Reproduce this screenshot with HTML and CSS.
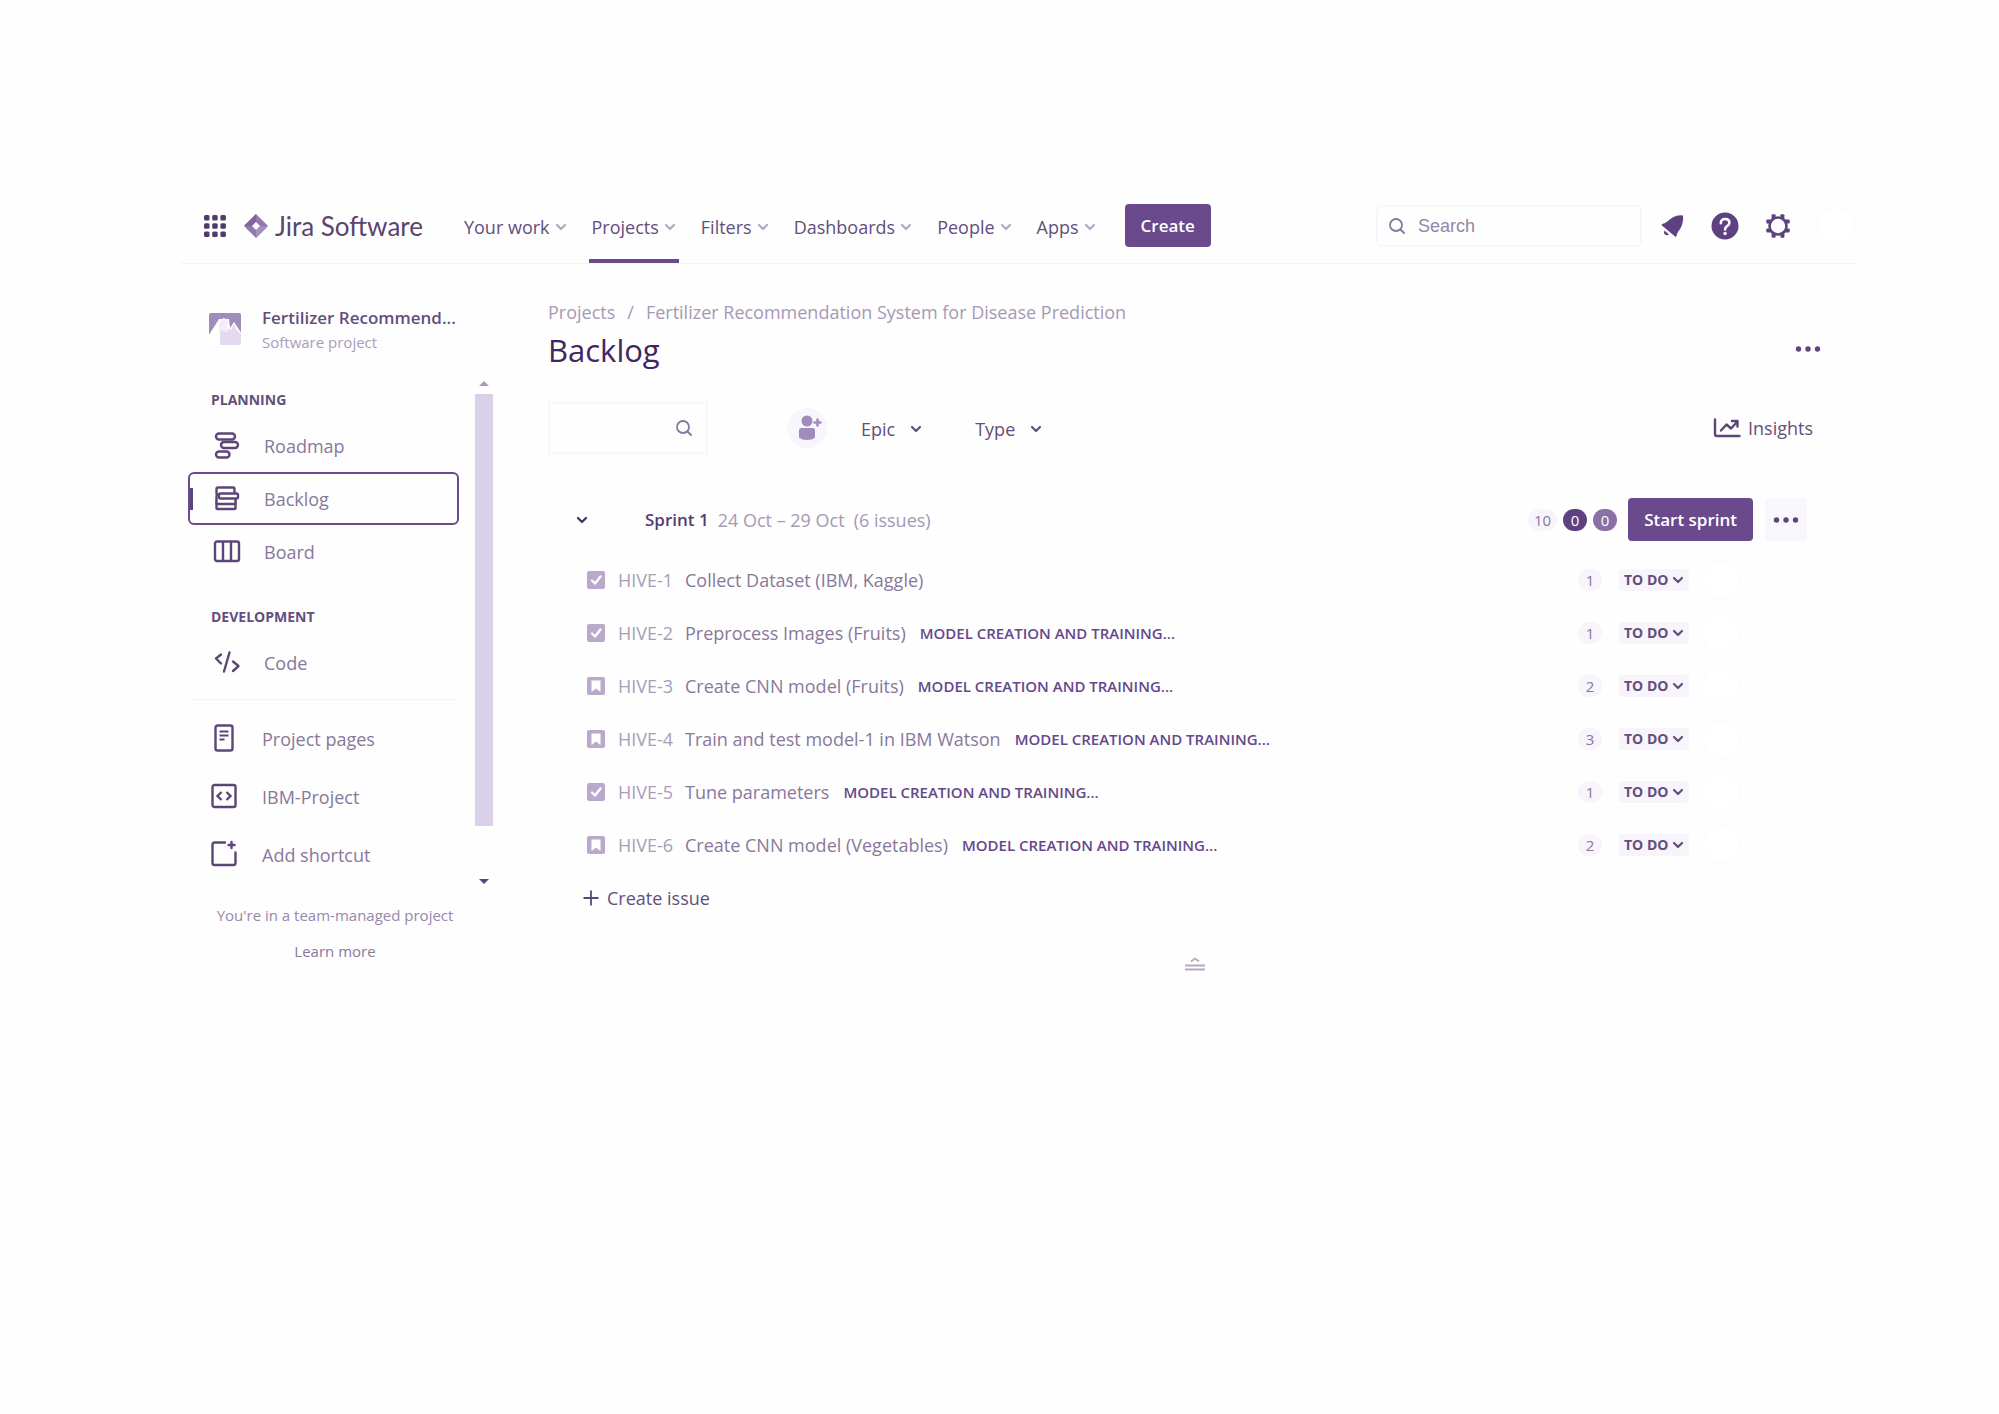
FILE: index.html
```html
<!DOCTYPE html>
<html lang="en">
<head>
<meta charset="utf-8">
<meta name="viewport" content="width=device-width, initial-scale=1">
<title>Backlog - Jira Software</title>
<link rel="stylesheet" href="styles.css">
</head>
<body>
<svg class="sprite" aria-hidden="true">
  <symbol id="chev" viewBox="0 0 12 12"><path d="M2 4l4 4 4-4" fill="none" stroke="currentColor" stroke-width="2.2" stroke-linecap="round" stroke-linejoin="round"/></symbol>
  <symbol id="lens" viewBox="0 0 18 18"><circle cx="8" cy="8" r="6" fill="none" stroke="currentColor" stroke-width="1.8"/><path d="M12.500 12.500L16 16" stroke="currentColor" stroke-width="2" stroke-linecap="round"/></symbol>
  <symbol id="dots" viewBox="0 0 26 8"><circle cx="3.500" cy="4" r="2.700" fill="currentColor"/><circle cx="13" cy="4" r="2.700" fill="currentColor"/><circle cx="22.500" cy="4" r="2.700" fill="currentColor"/></symbol>
  <symbol id="task" viewBox="0 0 18 18"><rect width="18" height="18" rx="2" fill="#b9aacb"/><path d="M5 9.500l3 3 5.500-7" fill="none" stroke="#fff" stroke-width="2.400" stroke-linecap="round" stroke-linejoin="round"/></symbol>
  <symbol id="story" viewBox="0 0 18 18"><rect width="18" height="18" rx="2" fill="#b9aacb"/><path d="M4.500 3.500h9v11.500l-4.500-3.500-4.500 3.500z" fill="#fff"/></symbol>
</svg>

<div class="app">
  <header class="topbar">
    <button class="icon-btn apps" aria-label="Switch to">
      <svg width="24" height="24" viewBox="0 0 24 24" fill="#4f3a6e"><rect x="1" y="1" width="5.500" height="5.500" rx="1.500"/><rect x="9.200" y="1" width="5.500" height="5.500" rx="1.500"/><rect x="17.400" y="1" width="5.500" height="5.500" rx="1.500"/><rect x="1" y="9.200" width="5.500" height="5.500" rx="1.500"/><rect x="9.200" y="9.200" width="5.500" height="5.500" rx="1.500"/><rect x="17.400" y="9.200" width="5.500" height="5.500" rx="1.500"/><rect x="1" y="17.400" width="5.500" height="5.500" rx="1.500"/><rect x="9.200" y="17.400" width="5.500" height="5.500" rx="1.500"/><rect x="17.400" y="17.400" width="5.500" height="5.500" rx="1.500"/></svg>
    </button>
    <a class="logo" href="#">
      <svg width="24" height="24" viewBox="0 0 24 24"><path d="M12 0l11.300 11.300a1 1 0 0 1 0 1.400L12 24 .7 12.700a1 1 0 0 1 0-1.400z" fill="#9179b0"/><path d="M12 0v8L8 12H.4q0-.4.3-.7z" fill="#7d659e"/><path d="M12 24v-8l4-4h7.600q0 .4-.3.7z" fill="#a48fbe"/><path d="M12 8l4 4-4 4-4-4z" fill="#fff"/></svg>
      <span>Jira Software</span>
    </a>
    <nav class="menu" aria-label="Primary">
      <button>Your work<svg class="chev"><use href="#chev"/></svg></button>
      <button class="current">Projects<svg class="chev"><use href="#chev"/></svg></button>
      <button>Filters<svg class="chev"><use href="#chev"/></svg></button>
      <button>Dashboards<svg class="chev"><use href="#chev"/></svg></button>
      <button>People<svg class="chev"><use href="#chev"/></svg></button>
      <button>Apps<svg class="chev"><use href="#chev"/></svg></button>
    </nav>
    <button class="primary">Create</button>
    <div class="tools">
      <label class="search"><svg class="lens"><use href="#lens"/></svg><input type="search" placeholder="Search" aria-label="Search"></label>
      <button class="icon-btn" aria-label="Notifications">
        <svg width="28" height="28" viewBox="0 0 28 28" fill="#5d4180"><path d="M25 3.500q.8 5-1 9.500-1.500 4-3.800 6.500-1.200 1.500-1.700 4.500-.4 1.300-1.500.4L4 13.500q-1-1 .3-1.500 3-.8 4.700-2.300 3-2.800 6-4.500 4.500-2.500 10-1.700z"/><path d="M6.500 18.500l4.500 4q-2.500 1.500-4.200-.2-1.500-1.500-.3-3.800z"/></svg>
      </button>
      <button class="icon-btn" aria-label="Help">
        <svg width="28" height="28" viewBox="0 0 28 28"><circle cx="14" cy="14" r="13.500" fill="#5d4180"/><path d="M9.800 11.300q0-4.300 4.300-4.300t4.300 3.800q0 2.200-2.300 3.400-2 1.100-2 3.300" fill="none" stroke="#fff" stroke-width="2.600" stroke-linecap="round"/><circle cx="14.100" cy="21.500" r="1.700" fill="#fff"/></svg>
      </button>
      <button class="icon-btn" aria-label="Settings">
        <svg width="28" height="28" viewBox="0 0 28 28"><g fill="#5d4180"><rect x="7.600" y="2.300" width="4" height="5" rx="1"/><rect x="16.400" y="2.300" width="4" height="5" rx="1"/><rect x="7.600" y="20.700" width="4" height="5" rx="1"/><rect x="16.400" y="20.700" width="4" height="5" rx="1"/><rect x="2.300" y="7.600" width="5" height="4" rx="1"/><rect x="2.300" y="16.400" width="5" height="4" rx="1"/><rect x="20.700" y="7.600" width="5" height="4" rx="1"/><rect x="20.700" y="16.400" width="5" height="4" rx="1"/></g><circle cx="14" cy="14" r="8.500" fill="#fff" stroke="#5d4180" stroke-width="2.600"/></svg>
      </button>
      <button class="avatar" aria-label="Your profile"></button>
    </div>
  </header>

  <div class="body">
    <aside class="sidebar">
      <div class="project">
        <svg width="34" height="34" viewBox="0 0 34 34"><path d="M3 1h28q2 0 2 2v19l-4 1H5l-4-1V3q0-2 2-2z" fill="#a08bba"/><path d="M0 24l6-9 5-8h10l1 9 4-6 8 12v12H0z" fill="#fff"/><path d="M11 10l4-4 4 1 1 12h-9z" fill="#f3edf8"/><path d="M12 33V18l7 2 2-4 2 2 3-6 2 5 5 5v9q0 2-2 2z" fill="#e4daf0"/></svg>
        <div>
          <div class="project-name">Fertilizer Recommend...</div>
          <div class="project-type">Software project</div>
        </div>
      </div>
      <div class="scroller">
        <nav class="side-nav" aria-label="Project">
          <h2>PLANNING</h2>
          <a href="#"><svg width="30" height="30" viewBox="0 0 30 30" fill="none" stroke="#5c4678" stroke-width="2.400"><rect x="4" y="2.500" width="19" height="6" rx="3"/><rect x="9" y="11" width="17" height="6" rx="3"/><rect x="4" y="20.500" width="13.500" height="6" rx="3"/></svg>Roadmap</a>
          <a class="selected" href="#"><svg width="30" height="30" viewBox="0 0 30 30" fill="#fff" stroke="#5c4678" stroke-width="2.400"><rect x="4.500" y="17" width="19" height="8" rx="1"/><rect x="4.500" y="11" width="19" height="9" rx="1"/><rect x="4.500" y="3.500" width="18" height="7" rx="1.500"/><rect x="7" y="9.500" width="19" height="5" rx="1.500"/></svg>Backlog</a>
          <a href="#"><svg width="30" height="30" viewBox="0 0 30 30" fill="none" stroke="#5c4678" stroke-width="2.400"><rect x="3" y="4.500" width="24" height="19.500" rx="2"/><path d="M11 5v19M19 5v19"/></svg>Board</a>
          <h2 class="later">DEVELOPMENT</h2>
          <a href="#"><svg width="30" height="30" viewBox="0 0 30 30" fill="none" stroke="#5c4678" stroke-width="2.400" stroke-linecap="round" stroke-linejoin="round"><path d="M9 6.500L4 10.500l5 5M17.500 4.500l-5.500 19M21 13.500l5.500 4.500-5.500 5"/></svg>Code</a>
          <hr>
          <div class="shortcuts">
            <a href="#"><svg width="30" height="30" viewBox="0 0 30 30" fill="none" stroke="#5c4678" stroke-width="2.400"><rect x="6.500" y="1.500" width="17" height="25" rx="2"/><path d="M10.500 7.500h9M10.500 11.500h9M10.500 15.500h5" stroke-width="2"/></svg>Project pages</a>
            <a href="#"><svg width="30" height="30" viewBox="0 0 30 30" fill="none" stroke="#5c4678" stroke-width="2.400"><rect x="3.500" y="3" width="23" height="22" rx="2"/><path d="M12.500 10l-4 4 4 4M17.500 10l4 4-4 4"/></svg>IBM-Project</a>
            <a href="#"><svg width="30" height="30" viewBox="0 0 30 30" fill="none" stroke="#5c4678" stroke-width="2.400" stroke-linecap="round"><path d="M16 2.500H5.500q-2 0-2 2V23q0 2 2 2H24.500q2 0 2-2V12.500M22.500 2v6M19.500 5h6"/></svg>Add shortcut</a>
          </div>
        </nav>
        <div class="scrollbar" aria-hidden="true">
          <svg width="10" height="5" viewBox="0 0 10 5"><path d="M0 5l5-5 5 5z" fill="#a99ab9"/></svg>
          <div class="thumb"></div>
          <svg width="10" height="5" viewBox="0 0 10 5"><path d="M0 0h10L5 5z" fill="#5c4678"/></svg>
        </div>
      </div>
      <footer class="side-foot">
        <p>You're in a team-managed project</p>
        <a href="#">Learn more</a>
      </footer>
    </aside>

    <main class="main">
      <nav class="crumbs" aria-label="Breadcrumb"><a href="#">Projects</a><span>/</span><a href="#">Fertilizer Recommendation System for Disease Prediction</a></nav>
      <div class="title-row">
        <h1>Backlog</h1>
        <button class="icon-btn" aria-label="More actions"><svg class="dots"><use href="#dots"/></svg></button>
      </div>
      <div class="toolbar">
        <label class="filter"><input type="text" aria-label="Search backlog"><svg class="lens"><use href="#lens"/></svg></label>
        <button class="add-person" aria-label="Add people"><svg width="26" height="28" viewBox="0 0 26 28" fill="#a08bba"><circle cx="10" cy="7" r="5.500"/><path d="M2 16.500q0-2.500 2.500-2.500h11q2.500 0 2.500 2.500v7q-3 2.500-8 2.500t-8-2.500z"/><path d="M20.500 5.500v6M17.500 8.500h6" stroke="#a08bba" stroke-width="2.600" stroke-linecap="round"/></svg></button>
        <button class="drop">Epic<svg class="chev"><use href="#chev"/></svg></button>
        <button class="drop">Type<svg class="chev"><use href="#chev"/></svg></button>
        <button class="insights"><svg width="28" height="20" viewBox="0 0 28 20" fill="none" stroke="#5c4678" stroke-width="2.400" stroke-linecap="round" stroke-linejoin="round"><path d="M2 1.500v14.500q0 2 2 2h22.500M8 12.500l5.500-6 4.500 4 6-6.500M19 3h5.500v5.500"/></svg>Insights</button>
      </div>

      <section class="sprint">
        <div class="sprint-head">
          <button class="icon-btn" aria-label="Collapse sprint"><svg class="chev"><use href="#chev"/></svg></button>
          <h3>Sprint 1</h3>
          <span class="dates">24 Oct – 29 Oct</span>
          <span class="count">(6 issues)</span>
          <div class="totals">
            <span class="pill">10</span>
            <span class="pill dark">0</span>
            <span class="pill mid">0</span>
          </div>
          <button class="primary">Start sprint</button>
          <button class="more" aria-label="Sprint actions"><svg class="dots"><use href="#dots"/></svg></button>
        </div>
        <ul class="issues">
          <li><svg class="type"><use href="#task"/></svg><a class="key" href="#">HIVE-1</a><span class="summary">Collect Dataset (IBM, Kaggle)</span><span class="points">1</span><span class="status"><select aria-label="Status of HIVE-1"><option>TO DO</option></select><svg class="chev"><use href="#chev"/></svg></span><button class="avatar" aria-label="Assignee"></button></li>
          <li><svg class="type"><use href="#task"/></svg><a class="key" href="#">HIVE-2</a><span class="summary">Preprocess Images (Fruits)</span><a class="epic" href="#">MODEL CREATION AND TRAINING...</a><span class="points">1</span><span class="status"><select aria-label="Status of HIVE-2"><option>TO DO</option></select><svg class="chev"><use href="#chev"/></svg></span><button class="avatar" aria-label="Assignee"></button></li>
          <li><svg class="type"><use href="#story"/></svg><a class="key" href="#">HIVE-3</a><span class="summary">Create CNN model (Fruits)</span><a class="epic" href="#">MODEL CREATION AND TRAINING...</a><span class="points">2</span><span class="status"><select aria-label="Status of HIVE-3"><option>TO DO</option></select><svg class="chev"><use href="#chev"/></svg></span><button class="avatar" aria-label="Assignee"></button></li>
          <li><svg class="type"><use href="#story"/></svg><a class="key" href="#">HIVE-4</a><span class="summary">Train and test model-1 in IBM Watson</span><a class="epic" href="#">MODEL CREATION AND TRAINING...</a><span class="points">3</span><span class="status"><select aria-label="Status of HIVE-4"><option>TO DO</option></select><svg class="chev"><use href="#chev"/></svg></span><button class="avatar" aria-label="Assignee"></button></li>
          <li><svg class="type"><use href="#task"/></svg><a class="key" href="#">HIVE-5</a><span class="summary">Tune parameters</span><a class="epic" href="#">MODEL CREATION AND TRAINING...</a><span class="points">1</span><span class="status"><select aria-label="Status of HIVE-5"><option>TO DO</option></select><svg class="chev"><use href="#chev"/></svg></span><button class="avatar" aria-label="Assignee"></button></li>
          <li><svg class="type"><use href="#story"/></svg><a class="key" href="#">HIVE-6</a><span class="summary">Create CNN model (Vegetables)</span><a class="epic" href="#">MODEL CREATION AND TRAINING...</a><span class="points">2</span><span class="status"><select aria-label="Status of HIVE-6"><option>TO DO</option></select><svg class="chev"><use href="#chev"/></svg></span><button class="avatar" aria-label="Assignee"></button></li>
        </ul>
        <button class="create-issue"><svg width="16" height="16" viewBox="0 0 16 16"><path d="M8 .5v15M.5 8h15" stroke="#5c4678" stroke-width="1.800"/></svg>Create issue</button>
      </section>
      <div class="resize"><svg width="20" height="14" viewBox="0 0 20 14" fill="none" stroke="#b3a8bf" stroke-width="1.800"><path d="M6 4.500l4-3 4 3M0 8.500h20M0 12.500h20"/></svg></div>
    </main>
  </div>
</div>
</body>
</html>
```
FILE: styles.css
```css
* { box-sizing: border-box; }

body {
  margin: 0;
  background: #fefefe;
  color: #634e7c;
  font: 18px/26px "Open Sans", "Noto Sans", sans-serif;
}

h1, h2, h3, p, ul { margin: 0; padding: 0; }
ul { list-style: none; }
a { color: inherit; text-decoration: none; }
svg { display: block; flex: none; }
.sprite { display: none; }

button, input, select {
  margin: 0;
  padding: 0;
  border: 0;
  background: none;
  color: inherit;
  font: inherit;
}

.app { padding: 190px 142px 0 180px; }
.icon-btn { display: flex; }
.chev { width: 12px; height: 12px; }
.lens { width: 18px; height: 18px; color: #8a78a0; }
.dots { width: 26px; height: 8px; color: #5c4678; }

.primary {
  height: 43px;
  padding: 1px 16px 0;
  border-radius: 4px;
  background: #6a4a8c;
  color: #fff;
  font-weight: 600;
  font-size: 17px;
}

.avatar {
  width: 38px;
  height: 38px;
  border: 1px solid #fbfafc;
  border-radius: 50%;
  background: #fff;
}

/* top bar */
.topbar {
  display: flex;
  align-items: center;
  height: 74px;
  padding: 0 0 2px 23px;
  border-bottom: 1px solid #f6f4f8;
}
.logo {
  display: flex;
  align-items: center;
  gap: 7px;
  margin-left: 17px;
  color: #59456f;
  font: 26px/32px Lato, sans-serif;
}
.menu {
  display: flex;
  align-self: stretch;
  gap: 19px;
  margin: 0 0 -2px 38px;
}
.menu button {
  display: flex;
  align-items: center;
  gap: 5px;
  padding: 4px 3px 0;
  border-bottom: 4px solid transparent;
}
.menu .current { border-color: #6a4a8c; }
.menu .chev { color: #b3a6c3; }
.topbar > .primary { margin-left: 26px; }
.tools {
  display: flex;
  align-items: center;
  gap: 25px;
  margin-left: auto;
  padding-right: 2px;
}
.search {
  display: flex;
  align-items: center;
  gap: 12px;
  width: 266px;
  height: 42px;
  margin-right: -9px;
  padding: 0 10px;
  border: 2px solid #f7f5fa;
  border-radius: 6px;
}
.search input {
  width: 100%;
  outline: 0;
  font: 18px/24px "Liberation Sans", Arial, sans-serif;
}
.search input::placeholder { color: #9586a8; opacity: 1; }

.body { display: flex; }

/* sidebar */
.sidebar {
  flex: none;
  width: 313px;
  padding: 38px 0 0 8px;
}
.project {
  display: flex;
  align-items: center;
  gap: 20px;
  height: 75px;
  padding: 0 0 22px 20px;
}
.project-name { font-weight: 600; font-size: 17px; line-height: 26px; white-space: nowrap; }
.project-type { color: #a99db8; font-size: 15px; line-height: 22px; }
.scroller { display: flex; justify-content: space-between; }
.side-nav { width: 271px; }
.side-nav h2 {
  padding: 4px 0 0 23px;
  font-size: 14px;
  font-weight: 700;
  line-height: 38px;
}
.side-nav .later { margin-top: 16px; }
.side-nav a {
  display: flex;
  align-items: center;
  gap: 22px;
  height: 53px;
  padding-left: 24px;
  color: #88789b;
}
.side-nav .selected {
  padding-left: 22px;
  border: 2px solid #6a4a8c;
  border-radius: 6px;
  background: linear-gradient(#5c4678, #5c4678) 0 50% / 3px 22px no-repeat;
}
.side-nav hr {
  margin: 10px 0;
  border: 0;
  border-top: 1px solid #f6f4f8;
}
.shortcuts a { height: 58px; padding-left: 21px; gap: 23px; }
.scrollbar {
  display: flex;
  flex-direction: column;
  align-items: center;
  width: 18px;
  padding: 4px 0 0;
}
.thumb {
  flex: 1;
  width: 100%;
  margin: 8px 0 53px;
  background: #dad0e7;
}
.side-foot {
  display: grid;
  gap: 12px;
  width: 294px;
  margin-top: 19px;
  justify-items: center;
  color: #9788aa;
  font-size: 15px;
  line-height: 24px;
}
.side-foot a { color: #88789b; }

/* main column */
.main {
  flex: 1;
  padding: 35px 36px 0 55px;
}
.crumbs { display: flex; gap: 12px; color: #a599b5; }
.title-row {
  display: flex;
  align-items: center;
  justify-content: space-between;
  height: 50px;
}
h1 { color: #3f2762; font-size: 31px; font-weight: 500; line-height: 40px; }
.title-row .icon-btn { padding-bottom: 2px; }
.toolbar {
  display: flex;
  align-items: center;
  margin-top: 27px;
}
.filter {
  display: flex;
  align-items: center;
  width: 160px;
  height: 52px;
  padding: 0 13px;
  border: 2px solid #f9f7fb;
}
.filter input { flex: 1; min-width: 0; outline: 0; }
.add-person {
  display: grid;
  place-items: center;
  width: 40px;
  height: 40px;
  margin: 0 34px 0 79px;
  padding-left: 5px;
  border-radius: 50%;
  background: #f8f5fc;
}
.drop { display: flex; align-items: center; gap: 15px; margin-right: 53px; padding-top: 2px; }
.insights { display: flex; align-items: center; gap: 7px; margin-left: auto; margin-right: 8px; }

.sprint { padding: 44px 14px 0 28px; }
.sprint-head { display: flex; align-items: center; height: 43px; color: #a599b5; }
.sprint-head .chev { color: #48306a; }
.sprint-head h3 { margin: 0 9px 0 57px; color: #533c73; font-size: 17px; font-weight: 600; }
.dates { margin-right: 9px; }
.totals { display: flex; gap: 6px; margin: 0 11px 0 auto; }
.pill, .points {
  min-width: 24px;
  border-radius: 11px;
  background: #f7f4fb;
  color: #88789b;
  font-size: 15px;
  line-height: 22px;
  text-align: center;
}
.pill { padding: 0 6px; }
.pill.dark { background: #5d4180; color: #fff; }
.pill.mid { background: #8a70a6; color: #fff; }
.more {
  display: grid;
  place-items: center;
  width: 42px;
  height: 43px;
  margin-left: 12px;
  border-radius: 4px;
  background: #f9f6fc;
}

.issues { padding: 12px 67px 0 11px; }
.issues li { display: flex; align-items: center; height: 53px; }
.type { width: 18px; height: 18px; }
.key { width: 67px; margin-left: 13px; color: #a99db8; }
.summary { color: #88789b; }
.epic { margin-left: 14px; color: #65488a; font-size: 15px; font-weight: 600; }
.points { margin: 0 17px 0 auto; }
.status {
  display: flex;
  align-items: center;
  gap: 3px;
  height: 22px;
  margin-right: 13px;
  padding: 0 5px;
  border-radius: 3px;
  background: #f7f4fb;
}
.status select { appearance: none; height: 22px; font-size: 14px; font-weight: 700; line-height: 22px; }
.create-issue {
  display: flex;
  align-items: center;
  gap: 8px;
  height: 54px;
  padding-left: 7px;
}
.resize { display: grid; justify-items: center; margin-top: 32px; padding-left: 20px; }
```
